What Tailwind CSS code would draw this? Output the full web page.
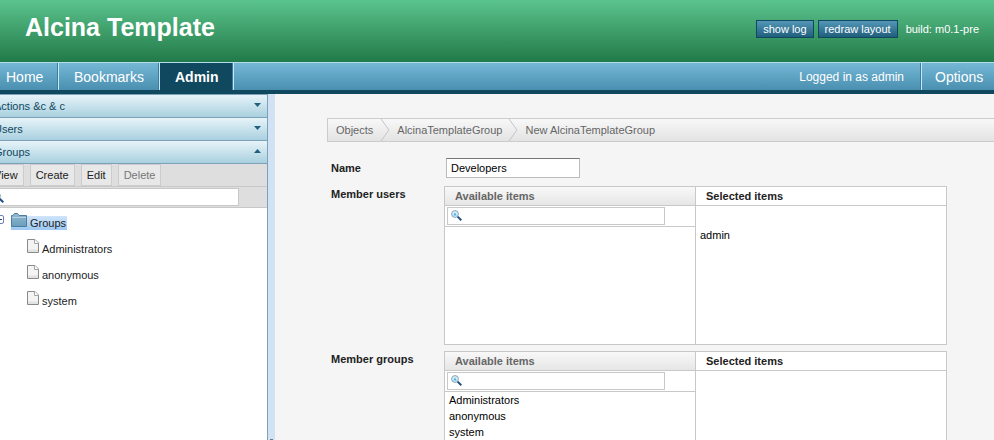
<!DOCTYPE html>
<html lang="en">
<head>
<meta charset="utf-8">
<title>Alcina Template</title>
<script src="https://cdn.jsdelivr.net/npm/@tailwindcss/browser@4"></script>
</head>
<body class="h-screen overflow-hidden flex flex-col bg-[#f5f5f5] text-[11px] leading-4 text-[#222] font-['Liberation_Sans',Arial,sans-serif]">
<svg class="hidden" aria-hidden="true">
  <symbol id="lens" viewBox="0 0 11 11">
    <circle cx="4" cy="4" r="3.400" fill="#d4eefb" stroke="#8ba3b5"/>
    <path d="M2.300 5.500 4 2.500l1.700 3z" fill="#48b4e8"/>
    <path d="M6.600 6.600 10.300 10.300" stroke="#1f4f85" stroke-width="2"/>
  </symbol>
  <symbol id="page" viewBox="0 0 12 14">
    <path d="M.5.5h7.5l3.500 3.500v9.500H.5z" fill="#f4f4f4" stroke="#8a8a8a"/>
    <path d="M1 10.500h10V13H1z" fill="#e2e2e2"/>
    <path d="M7.500.5v4h4" fill="#fff" stroke="#a5a5a5"/>
  </symbol>
</svg>

<header class="h-[62px] shrink-0 flex items-center justify-between pl-[25px] pr-[15px] text-white bg-linear-to-b from-[#5bc48e] to-[#217a49]">
  <h1 class="text-[25px] leading-7 font-bold pb-2">Alcina Template</h1>
  <div class="flex items-center gap-1 pb-1">
    <button class="h-[18px] px-1.5 leading-4 border border-[#10485f] bg-linear-to-b from-[#5497b7] to-[#1f5f7c]">show log</button>
    <button class="h-[18px] px-1.5 leading-4 border border-[#10485f] bg-linear-to-b from-[#5497b7] to-[#1f5f7c]">redraw layout</button>
    <span class="pl-1">build: m0.1-pre</span>
  </div>
</header>

<nav class="h-8 shrink-0 flex text-[14px] leading-7 text-white border-t border-t-[#b5dcea] border-b-4 border-b-[#10485f] bg-linear-to-b from-[#75b8d6] to-[#4a8fb0]">
  <a href="#" class="w-[58px] pl-1.5 border-r border-[#3b7d9c]">Home</a>
  <a href="#" class="w-[101px] pl-[15px] border-l border-l-[#c9e8f3] border-r border-r-[#3b7d9c]">Bookmarks</a>
  <a href="#" class="w-[74px] pl-[15px] font-bold border-l border-l-[#c9e8f3] border-r border-r-[#3b7d9c] bg-[#10485f] bg-clip-padding">Admin</a>
  <span class="flex-1 border-l border-l-[#c9e8f3] border-r border-r-[#3b7d9c] pr-4 text-right text-[12px] leading-7">Logged in as admin</span>
  <a href="#" class="w-[73px] pl-[13px] shrink-0 border-l border-l-[#c9e8f3]">Options</a>
</nav>

<div class="flex-1 min-h-0 flex">
  <aside class="w-[268px] shrink-0 overflow-hidden bg-white border-r border-[#7ba2b8]">
    <div class="-ml-4">
      <button class="w-full h-[23px] pl-2.5 pr-1.5 flex items-center justify-between text-[#10485f] border-t border-[#7ba2b8] bg-linear-to-b from-[#e7f4f9] to-[#a9d0df]">Actions &amp;c &amp; c
        <svg class="w-[7px] h-1 mb-0.5" viewBox="0 0 7 4"><path d="M0 0h7L3.500 4z" fill="#1f6280"/></svg></button>
      <button class="w-full h-[23px] pl-2.5 pr-1.5 flex items-center justify-between text-[#10485f] border-t border-[#7ba2b8] bg-linear-to-b from-[#e7f4f9] to-[#a9d0df]">Users
        <svg class="w-[7px] h-1 mb-0.5" viewBox="0 0 7 4"><path d="M0 0h7L3.500 4z" fill="#1f6280"/></svg></button>
      <button class="w-full h-6 pl-2.5 pr-1.5 flex items-center justify-between text-[#10485f] border-y border-[#7ba2b8] bg-linear-to-b from-[#e7f4f9] to-[#a9d0df]">Groups
        <svg class="w-[7px] h-1 mb-0.5" viewBox="0 0 7 4"><path d="M0 4h7L3.500 0z" fill="#1f6280"/></svg></button>
      <div class="h-[23px] pl-1 flex items-start gap-1.5 bg-[#dedede] border-b border-[#c8c8c8]">
        <button class="h-[22px] px-[5px] border border-[#ccc] bg-[#e8e8e8]">View</button>
        <button class="h-[22px] px-[5px] border border-[#ccc] bg-[#e8e8e8]">Create</button>
        <button class="h-[22px] px-[5px] border border-[#ccc] bg-[#e8e8e8]">Edit</button>
        <button disabled class="h-[22px] px-[5px] border border-[#ccc] bg-[#e8e8e8] text-[#777]">Delete</button>
      </div>
      <div class="h-[21px] py-px pl-1 bg-[#dedede] border-b border-[#c8c8c8]">
        <label class="w-[251px] h-[18px] px-1 flex items-center gap-1 bg-white border border-[#c8c8c8]">
          <svg class="size-[11px]"><use href="#lens"/></svg>
          <input type="text" aria-label="Filter groups" class="flex-1 min-w-0 outline-none">
        </label>
      </div>
      <ul class="pt-[5px]">
        <li>
          <div class="h-[22px] pl-[11px] flex items-start gap-[7px]">
            <button aria-label="Collapse Groups" class="mt-0.5 flex"><svg class="size-[9px]" viewBox="0 0 9 9"><rect x=".5" y=".5" width="8" height="8" rx="1.500" fill="#fff" stroke="#6f80b5"/><path d="M2 4.500h5" stroke="#223a8a"/></svg></button>
            <span class="h-[14px] mt-[3px] pr-px flex items-end gap-[3px] bg-linear-to-b from-[#cfe5fa] to-[#9cc8f2]">
              <svg class="w-4 h-[14px] mb-[3px]" viewBox="0 0 16 14"><defs><linearGradient id="f" x2="0" y2="1"><stop stop-color="#94bad0"/><stop offset="1" stop-color="#6a9dbb"/></linearGradient></defs><path d="M.5 13.500V2.500H2l1.500-2h3l1.500 2h7.500v11z" fill="url(#f)" stroke="#4c7f9d"/><path d="M1 4.500h14" stroke="#b4d2e1"/></svg>
              <span class="leading-[14px]">Groups</span>
            </span>
          </div>
          <ul class="pl-[43px] flex flex-col">
            <li class="h-[26px] flex items-center gap-[3px]"><svg class="w-3 h-[14px] mb-1"><use href="#page"/></svg><span class="pt-0.5">Administrators</span></li>
            <li class="h-[26px] flex items-center gap-[3px]"><svg class="w-3 h-[14px] mb-1"><use href="#page"/></svg><span class="pt-0.5">anonymous</span></li>
            <li class="h-[26px] flex items-center gap-[3px]"><svg class="w-3 h-[14px] mb-1"><use href="#page"/></svg><span class="pt-0.5">system</span></li>
          </ul>
        </li>
      </ul>
    </div>
  </aside>
  <div class="w-[7px] shrink-0 flex flex-col justify-end items-center bg-[#d0e2f4]"><div class="w-[3px] h-px bg-[#777]"></div></div>

  <main class="flex-1 min-w-0 overflow-hidden pt-6 pl-[52px]">
    <nav aria-label="Breadcrumb" class="h-6 pl-2 flex items-center text-[#666] border border-r-0 border-[#ccc] bg-linear-to-b from-[#f8f8f8] to-[#e3e3e3]">
      <a href="#">Objects</a>
      <svg class="w-2.5 h-[22px] mx-[7px]" viewBox="0 0 10 22"><path d="M1 0l8 11-8 11" fill="none" stroke="#c4c4c4"/></svg>
      <a href="#">AlcinaTemplateGroup</a>
      <svg class="w-2.5 h-[22px] ml-1.5 mr-[7px]" viewBox="0 0 10 22"><path d="M1 0l8 11-8 11" fill="none" stroke="#c4c4c4"/></svg>
      <span>New AlcinaTemplateGroup</span>
    </nav>

    <form class="pt-4 pl-1 grid grid-cols-[113px_503px]">
      <label for="name" class="pt-0.5 font-bold">Name</label>
      <div class="h-7 pl-0.5"><input id="name" type="text" value="Developers" class="w-[134px] h-5 px-1 bg-white text-black border border-[#bbb] border-t-[#777]"></div>

      <span id="users" class="font-bold">Member users</span>
      <div role="group" aria-labelledby="users" class="h-[159px] mb-1.5 grid grid-cols-[250px_250px] gap-px border border-[#c8c8c8] bg-[#c8c8c8] text-black">
        <section class="bg-white">
          <h2 class="h-[19px] pl-2.5 font-bold leading-[18px] text-[#666] border-b border-[#c8c8c8] bg-linear-to-b from-[#f8f8f8] to-[#e6e6e6]">Available items</h2>
          <div class="h-[21px] pt-px pl-0.5 border-b border-[#c8c8c8]">
            <label class="w-[218px] h-[18px] px-[3px] flex items-center gap-1 border border-[#c8c8c8]"><svg class="size-[11px] mb-0.5"><use href="#lens"/></svg><input type="text" aria-label="Filter users" class="flex-1 min-w-0 outline-none"></label>
          </div>
        </section>
        <section class="bg-white">
          <h2 class="h-[19px] pl-2.5 font-bold leading-[18px] text-[#222] border-b border-[#c8c8c8]">Selected items</h2>
          <ul class="pt-[21px] pl-1"><li>admin</li></ul>
        </section>
      </div>

      <span id="groups" class="font-bold">Member groups</span>
      <div role="group" aria-labelledby="groups" class="h-[159px] mb-1.5 grid grid-cols-[250px_250px] gap-px border border-[#c8c8c8] bg-[#c8c8c8] text-black">
        <section class="bg-white">
          <h2 class="h-[19px] pl-2.5 font-bold leading-[18px] text-[#666] border-b border-[#c8c8c8] bg-linear-to-b from-[#f8f8f8] to-[#e6e6e6]">Available items</h2>
          <div class="h-[21px] pt-px pl-0.5 border-b border-[#c8c8c8]">
            <label class="w-[218px] h-[18px] px-[3px] flex items-center gap-1 border border-[#c8c8c8]"><svg class="size-[11px] mb-0.5"><use href="#lens"/></svg><input type="text" aria-label="Filter groups" class="flex-1 min-w-0 outline-none"></label>
          </div>
          <ul class="pl-1"><li>Administrators</li><li>anonymous</li><li>system</li></ul>
        </section>
        <section class="bg-white">
          <h2 class="h-[19px] pl-2.5 font-bold leading-[18px] text-[#222] border-b border-[#c8c8c8]">Selected items</h2>
        </section>
      </div>
    </form>
  </main>
</div>
</body>
</html>
